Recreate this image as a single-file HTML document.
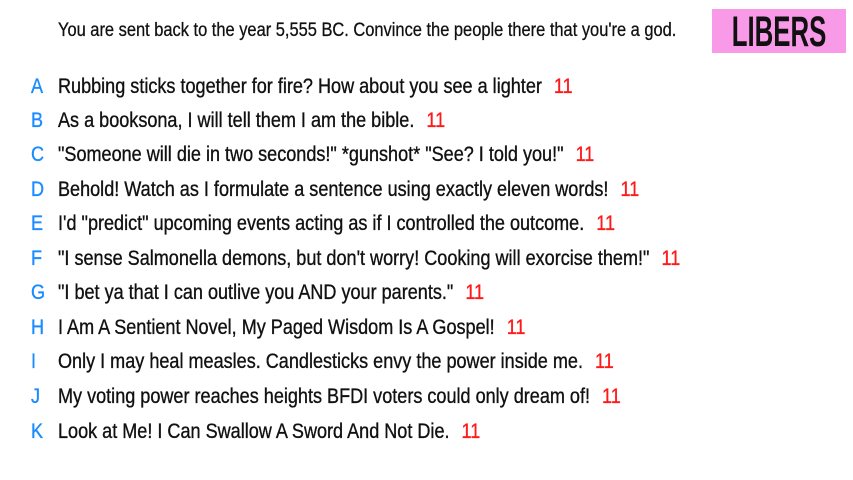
<!DOCTYPE html>
<html><head><meta charset="utf-8"><style>
html,body{margin:0;padding:0;background:#fff;}
body{width:853px;height:480px;position:relative;overflow:hidden;font-family:"Liberation Sans",sans-serif;color:#111;}
.hdr{position:absolute;left:58px;top:20px;font-size:19px;white-space:nowrap;transform:scaleX(0.865);transform-origin:left top;-webkit-text-stroke:0.3px #111;}
.box{position:absolute;left:712px;top:9px;width:134px;height:44px;background:#f99ae8;}
.box span{position:absolute;left:67px;top:1px;font-size:43px;line-height:44px;color:#111;font-weight:bold;white-space:nowrap;transform:translateX(-50%) scaleX(0.6);}
.row{position:absolute;left:0;height:30px;font-size:21px;line-height:30px;white-space:nowrap;-webkit-text-stroke:0.35px currentColor;}
.l{position:absolute;left:31px;color:#1a8cff;transform:scaleX(0.86);transform-origin:left top;}
.t{position:absolute;left:58px;transform:scaleX(0.86);transform-origin:left top;}
.n{color:#ff1a1a;margin-left:14px;}
</style></head><body>
<div class="hdr">You are sent back to the year 5,555 BC. Convince the people there that you're a god.</div>
<div class="box"><span>LIBERS</span></div>
<div class="row" style="top:72px"><span class="l">A</span><span class="t">Rubbing sticks together for fire? How about you see a lighter<span class="n">11</span></span></div>
<div class="row" style="top:106px"><span class="l">B</span><span class="t">As a booksona, I will tell them I am the bible.<span class="n">11</span></span></div>
<div class="row" style="top:140px"><span class="l">C</span><span class="t">"Someone will die in two seconds!" *gunshot* "See? I told you!"<span class="n">11</span></span></div>
<div class="row" style="top:175px"><span class="l">D</span><span class="t">Behold! Watch as I formulate a sentence using exactly eleven words!<span class="n">11</span></span></div>
<div class="row" style="top:209px"><span class="l">E</span><span class="t">I'd "predict" upcoming events acting as if I controlled the outcome.<span class="n">11</span></span></div>
<div class="row" style="top:244px"><span class="l">F</span><span class="t">"I sense Salmonella demons, but don't worry! Cooking will exorcise them!"<span class="n">11</span></span></div>
<div class="row" style="top:278px"><span class="l">G</span><span class="t">"I bet ya that I can outlive you AND your parents."<span class="n">11</span></span></div>
<div class="row" style="top:313px"><span class="l">H</span><span class="t">I Am A Sentient Novel, My Paged Wisdom Is A Gospel!<span class="n">11</span></span></div>
<div class="row" style="top:347px"><span class="l">I</span><span class="t">Only I may heal measles. Candlesticks envy the power inside me.<span class="n">11</span></span></div>
<div class="row" style="top:382px"><span class="l">J</span><span class="t">My voting power reaches heights BFDI voters could only dream of!<span class="n">11</span></span></div>
<div class="row" style="top:417px"><span class="l">K</span><span class="t">Look at Me! I Can Swallow A Sword And Not Die.<span class="n">11</span></span></div>
</body></html>
